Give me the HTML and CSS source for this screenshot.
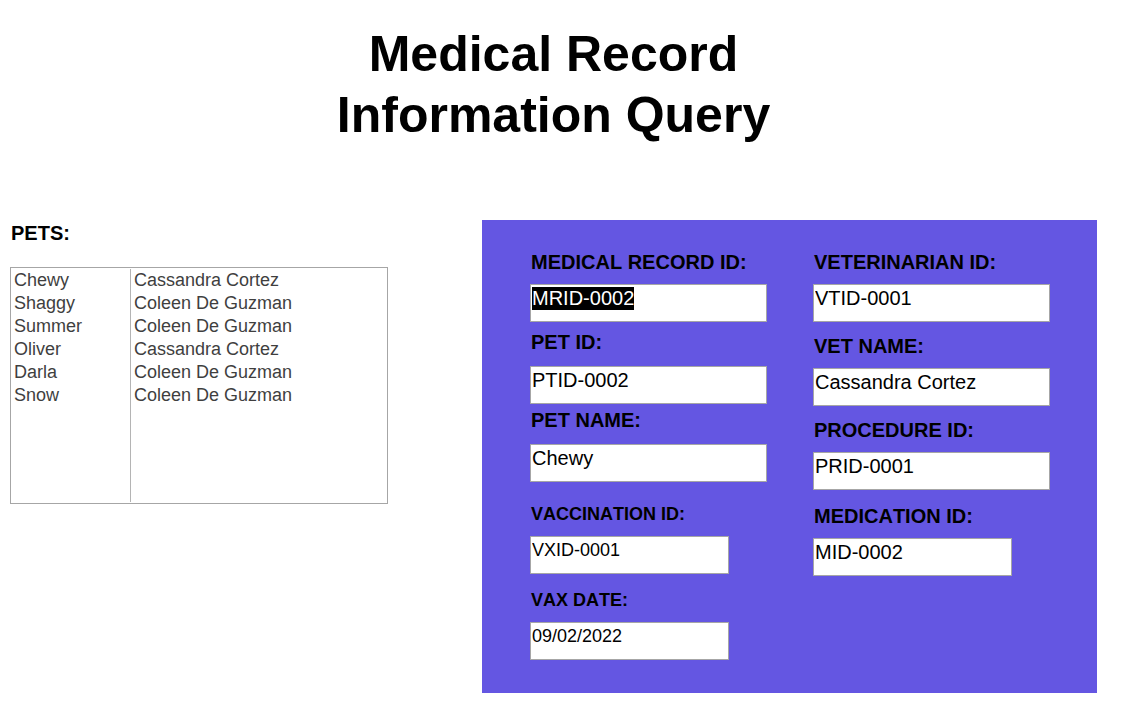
FILE: index.html
```html
<!DOCTYPE html>
<html lang="en">
<head>
<meta charset="utf-8">
<meta name="viewport" content="width=device-width, initial-scale=1">
<title>Medical Record Information Query</title>
<link rel="stylesheet" href="styles.css">
</head>
<body>
<main class="page">
  <h1 class="title">Medical Record<br>Information Query</h1>
  <div class="content">
    <section class="pets">
      <h2 class="pets-heading" id="pets-heading">PETS:</h2>
      <div class="list-box">
        <table class="pets-table" aria-labelledby="pets-heading">
          <tbody>
            <tr><td>Chewy</td><td>Cassandra Cortez</td></tr>
            <tr><td>Shaggy</td><td>Coleen De Guzman</td></tr>
            <tr><td>Summer</td><td>Coleen De Guzman</td></tr>
            <tr><td>Oliver</td><td>Cassandra Cortez</td></tr>
            <tr><td>Darla</td><td>Coleen De Guzman</td></tr>
            <tr><td>Snow</td><td>Coleen De Guzman</td></tr>
          </tbody>
        </table>
      </div>
    </section>
    <form class="record">
      <div class="record-column">
        <div class="field">
          <label for="record-id">MEDICAL RECORD ID:</label>
          <input type="text" id="record-id" value="MRID-0002">
        </div>
        <div class="field field-roomy space-s">
          <label for="pet-id">PET ID:</label>
          <input type="text" id="pet-id" value="PTID-0002">
        </div>
        <div class="field field-roomy space-xs">
          <label for="pet-name">PET NAME:</label>
          <input type="text" id="pet-name" value="Chewy">
        </div>
        <div class="field field-small field-narrow space-xl">
          <label for="vaccination-id">VACCINATION ID:</label>
          <input type="text" id="vaccination-id" value="VXID-0001">
        </div>
        <div class="field field-small field-narrow space-l">
          <label for="vax-date">VAX DATE:</label>
          <input type="text" id="vax-date" value="09/02/2022">
        </div>
      </div>
      <div class="record-column">
        <div class="field">
          <label for="vet-id">VETERINARIAN ID:</label>
          <input type="text" id="vet-id" value="VTID-0001">
        </div>
        <div class="field space-m">
          <label for="vet-name">VET NAME:</label>
          <input type="text" id="vet-name" value="Cassandra Cortez">
        </div>
        <div class="field space-m">
          <label for="procedure-id">PROCEDURE ID:</label>
          <input type="text" id="procedure-id" value="PRID-0001">
        </div>
        <div class="field field-narrow space-l">
          <label for="medication-id">MEDICATION ID:</label>
          <input type="text" id="medication-id" value="MID-0002">
        </div>
      </div>
    </form>
  </div>
</main>
<script src="script.js"></script>
</body>
</html>
```
FILE: styles.css
```css
* {
  box-sizing: border-box;
}

body {
  margin: 0;
  background: #fff;
  color: #000;
  font-family: "Liberation Sans", Arial, sans-serif;
  font-kerning: none;
}

.page {
  padding: 24px 51px 19px 10px;
}

.title {
  margin: 0 0 74px;
  font-size: 50px;
  line-height: 61px;
  text-align: center;
}

.content {
  display: flex;
  align-items: flex-start;
  gap: 94px;
}

.pets {
  flex: 0 0 378px;
}

.pets-heading {
  margin: 0 0 22px;
  padding: 1px 1px 0;
  font-size: 20px;
  line-height: 24px;
}

.list-box {
  padding: 1px 0;
  border: 1px solid #a6a6a6;
}

.pets-table {
  width: 100%;
  border-spacing: 0;
  color: #3f3f3f;
  font-size: 18px;
  line-height: 23px;
}

.pets-table td {
  height: 23px;
  padding: 0 3px;
  vertical-align: top;
}

.pets-table td:first-child {
  width: 120px;
  border-right: 1px solid #b4b4b4;
}

.pets-table tr:last-child td {
  height: 118px;
}

.record {
  flex: 1;
  display: grid;
  grid-template-columns: 1fr 1fr;
  gap: 46px;
  padding: 30px 47px 33px 48px;
  background: #6456e2;
}

.record-column {
  display: flex;
  flex-direction: column;
}

.field {
  display: flex;
  flex-direction: column;
  gap: 10px;
}

.field-roomy {
  gap: 12px;
}

.field label {
  padding-left: 1px;
  font-size: 20px;
  font-weight: bold;
  line-height: 24px;
  white-space: nowrap;
}

.field input {
  width: 100%;
  height: 38px;
  padding: 1px 1px 11px;
  border: 1px solid #a6a6a6;
  border-radius: 0;
  outline: none;
  background: #fff;
  color: #000;
  font-family: inherit;
  font-size: 20px;
  line-height: 24px;
}

.field input::selection {
  background: #000;
  color: #fff;
}

.field-narrow input {
  width: 84%;
}

.field-small label,
.field-small input {
  font-size: 18px;
}

.space-xs {
  margin-top: 4px;
}

.space-s {
  margin-top: 8px;
}

.space-m {
  margin-top: 12px;
}

.space-l {
  margin-top: 14px;
}

.space-xl {
  margin-top: 20px;
}

@media (max-width: 1000px) {
  .page {
    padding-right: 10px;
  }

  .content {
    flex-direction: column;
    align-items: stretch;
    gap: 32px;
  }

  .pets {
    flex-basis: auto;
  }
}
```
FILE: script.js
```js
const firstField = document.getElementById("record-id");
firstField.focus();
firstField.select();
```
